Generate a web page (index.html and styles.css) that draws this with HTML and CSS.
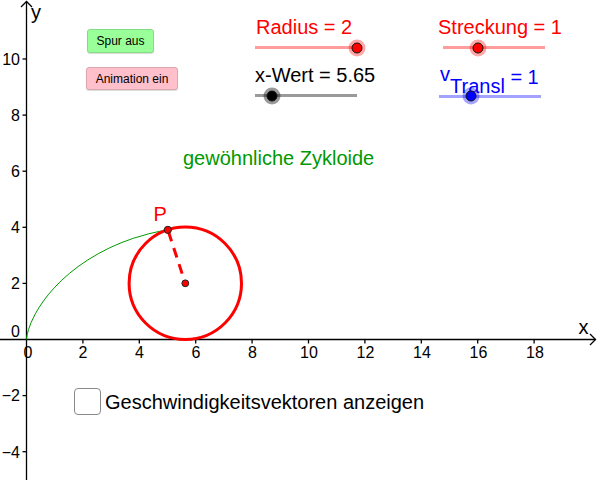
FILE: index.html
```html
<!DOCTYPE html>
<html lang="de">
<head>
<meta charset="utf-8">
<title>Zykloide</title>
<link rel="stylesheet" href="styles.css">
</head>
<body>
<div class="stage">
  <svg class="graph" width="600" height="480" viewBox="0 0 600 480" xmlns="http://www.w3.org/2000/svg">
    <g class="axes">
      <line x1="26.5" y1="1.5" x2="26.5" y2="480"/>
      <polyline points="21,7 26.5,1.5 32,7"/>
      <line x1="0" y1="339.5" x2="595.5" y2="339.5"/>
      <polyline points="590,334 595.5,339.5 590,345"/>
      <line x1="82.9" y1="339.5" x2="82.9" y2="343.5"/>
      <line x1="139.3" y1="339.5" x2="139.3" y2="343.5"/>
      <line x1="195.7" y1="339.5" x2="195.7" y2="343.5"/>
      <line x1="252.1" y1="339.5" x2="252.1" y2="343.5"/>
      <line x1="308.5" y1="339.5" x2="308.5" y2="343.5"/>
      <line x1="364.9" y1="339.5" x2="364.9" y2="343.5"/>
      <line x1="421.3" y1="339.5" x2="421.3" y2="343.5"/>
      <line x1="477.7" y1="339.5" x2="477.7" y2="343.5"/>
      <line x1="534.1" y1="339.5" x2="534.1" y2="343.5"/>
      <line x1="22.5" y1="59" x2="26.5" y2="59"/>
      <line x1="22.5" y1="115.1" x2="26.5" y2="115.1"/>
      <line x1="22.5" y1="171.2" x2="26.5" y2="171.2"/>
      <line x1="22.5" y1="227.3" x2="26.5" y2="227.3"/>
      <line x1="22.5" y1="283.4" x2="26.5" y2="283.4"/>
      <line x1="22.5" y1="395.6" x2="26.5" y2="395.6"/>
      <line x1="22.5" y1="451.7" x2="26.5" y2="451.7"/>
    </g>
    <g class="ticklabels xl">
      <text x="28" y="358">0</text>
      <text x="83" y="358">2</text>
      <text x="139.5" y="358">4</text>
      <text x="196" y="358">6</text>
      <text x="252.5" y="358">8</text>
      <text x="309" y="358">10</text>
      <text x="365.5" y="358">12</text>
      <text x="422" y="358">14</text>
      <text x="478.5" y="358">16</text>
      <text x="535" y="358">18</text>
    </g>
    <g class="ticklabels yl">
      <text x="20" y="64.8">10</text>
      <text x="20" y="120.9">8</text>
      <text x="20" y="177">6</text>
      <text x="20" y="233.1">4</text>
      <text x="20" y="289.2">2</text>
      <text x="20" y="337">0</text>
      <text x="20" y="401.4">−2</text>
      <text x="20" y="457.5">−4</text>
    </g>
    <text class="axislabel" x="31" y="19">y</text>
    <text class="axislabel" x="578.5" y="333.5">x</text>

    <polyline class="cycloid" points="26.5,339.5 26.51,339.22 26.58,338.38 26.75,336.99 27.34,333.91 28.49,329.68 31.14,322.46 35.41,313.67 39.02,307.53 43.42,301.02 48.65,294.22 54.74,287.28 61.71,280.26 69.55,273.28 78.26,266.47 87.80,259.91 98.12,253.76 109.22,248.0 120.99,242.82 133.37,238.28 148.92,233.74 159.60,231.35 167.85,229.87"/>
    <circle class="wheel" cx="185.3" cy="283.3" r="56.2"/>
    <line class="spoke" x1="167.85" y1="229.87" x2="185.3" y2="283.3"/>
    <circle class="pt" cx="185.3" cy="283.3" r="3.4"/>
    <circle class="pt" cx="167.85" cy="229.87" r="3.6"/>
    <text class="ptlabel" x="153.5" y="220.7">P</text>
  </svg>

  <div class="title-text">gewöhnliche Zykloide</div>

  <button class="btn btn-spur" type="button">Spur aus</button>
  <button class="btn btn-anim" type="button">Animation ein</button>

  <div class="slider slider-radius">
    <div class="slider-label red">Radius = 2</div>
    <div class="track track-red"><span class="knob knob-red" style="left:100%"></span></div>
  </div>

  <div class="slider slider-x">
    <div class="slider-label black">x-Wert = 5.65</div>
    <div class="track track-gray"><span class="knob knob-black" style="left:16.4%"></span></div>
  </div>

  <div class="slider slider-streck">
    <div class="slider-label red">Streckung = 1</div>
    <div class="track track-red"><span class="knob knob-red" style="left:34%"></span></div>
  </div>

  <div class="slider slider-v">
    <div class="slider-label blue"><span class="v">v</span><span class="sub">Transl</span> = 1</div>
    <div class="track track-blue"><span class="knob knob-blue" style="left:31%"></span></div>
  </div>

  <label class="check">
    <span class="box"></span>
    <span class="check-text">Geschwindigkeitsvektoren anzeigen</span>
  </label>
</div>
</body>
</html>
```
FILE: styles.css
```css
html, body {
  margin: 0;
  padding: 0;
  background: #fff;
}

.stage {
  position: relative;
  width: 600px;
  height: 480px;
  overflow: hidden;
  background: #fff;
  font-family: "Liberation Sans", Arial, sans-serif;
  color: #000;
}

.graph {
  position: absolute;
  left: 0;
  top: 0;
  display: block;
}

.axes line,
.axes polyline {
  stroke: #000;
  stroke-width: 1.3;
  fill: none;
}

.ticklabels text {
  font-family: "Liberation Sans", Arial, sans-serif;
  font-size: 16px;
  fill: #000;
}

.xl text {
  text-anchor: middle;
}

.yl text {
  text-anchor: end;
}

.axislabel {
  font-family: "Liberation Sans", Arial, sans-serif;
  font-size: 20px;
  fill: #000;
}

.cycloid {
  fill: none;
  stroke: #009900;
  stroke-width: 1;
}

.wheel {
  fill: none;
  stroke: #ff0000;
  stroke-width: 3;
}

.spoke {
  stroke: #ff0000;
  stroke-width: 3;
  stroke-dasharray: 10 7;
  stroke-dashoffset: -2;
}

.pt {
  fill: #ff0000;
  stroke: #202020;
  stroke-width: 1;
}

.ptlabel {
  font-family: "Liberation Sans", Arial, sans-serif;
  font-size: 20px;
  fill: #ff0000;
}

.title-text {
  position: absolute;
  left: 183px;
  top: 148px;
  font-size: 20px;
  line-height: 20px;
  color: #009900;
  white-space: nowrap;
}

.btn {
  position: absolute;
  display: flex;
  align-items: center;
  justify-content: center;
  padding: 0;
  margin: 0;
  font-family: "Liberation Sans", Arial, sans-serif;
  font-size: 12px;
  color: #000;
  border-radius: 3px;
  box-sizing: border-box;
  box-shadow: 0 1px 1px rgba(0, 0, 0, 0.15);
}

.btn-spur {
  left: 87px;
  top: 29px;
  width: 67px;
  height: 24px;
  background: #99ff99;
  border: 1px solid #84dc84;
}

.btn-anim {
  left: 86px;
  top: 67px;
  width: 92px;
  height: 23px;
  background: #ffc0cb;
  border: 1px solid #dca6b0;
}

.slider {
  position: absolute;
  display: flex;
  flex-direction: column;
  width: 102px;
}

.slider-label {
  height: 20px;
  font-size: 20px;
  line-height: 20px;
  white-space: nowrap;
}

.red { color: #ff0000; }
.black { color: #000; }
.blue { color: #0000ff; }

.slider-radius { left: 255px; top: 17px; }
.slider-radius .slider-label { padding-left: 1px; }

.slider-x { left: 255px; top: 65px; }

.slider-streck { left: 438px; top: 17px; }
.slider-streck .track { margin-left: 5px; }

.slider-v { left: 439px; top: 64px; }
.slider-v .slider-label { padding-left: 1px; }
.slider-v .track { margin-top: 10.5px; }

.v {
  vertical-align: 3px;
}

.sub {
  vertical-align: -9px;
  line-height: 0;
}

.track {
  position: relative;
  width: 102px;
  height: 3px;
  margin-top: 9px;
}

.track-red { background: #ff9c9c; }
.track-gray { background: #9a9a9a; }
.track-blue { background: #a3a3ff; }

.knob {
  position: absolute;
  top: 50%;
  width: 11px;
  height: 11px;
  box-sizing: border-box;
  border-radius: 50%;
  border: 1px solid #111;
  transform: translate(-50%, -50%);
}

.knob-red {
  background: #ff0000;
  box-shadow: 0 0 0 3px rgba(255, 0, 0, 0.35);
}

.knob-black {
  background: #000;
  box-shadow: 0 0 0 3px rgba(0, 0, 0, 0.4);
}

.knob-blue {
  background: #0000ff;
  box-shadow: 0 0 0 3px rgba(0, 0, 255, 0.35);
}

.check {
  position: absolute;
  left: 74px;
  top: 388px;
  display: flex;
  align-items: center;
  gap: 4px;
}

.box {
  width: 27px;
  height: 27px;
  box-sizing: border-box;
  border: 1.5px solid #8a8a8a;
  border-radius: 4px;
  background: #fff;
}

.check-text {
  font-size: 20px;
  line-height: 20px;
  white-space: nowrap;
  padding-top: 1px;
}
```
